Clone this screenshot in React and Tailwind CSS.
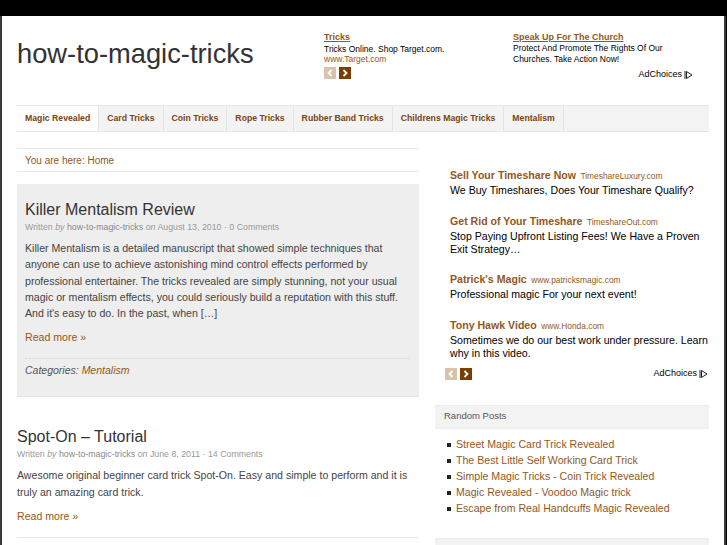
const brown = "text-[#94571a]";

const Arrows = () => (
  <div className="flex gap-[3px]">
    <span className="w-3 h-3 bg-[#d9c3ab] flex items-center justify-center">
      <svg width="8" height="8" viewBox="0 0 8 8"><path d="M5.5 1 L2.5 4 L5.5 7" fill="none" stroke="#fff" strokeWidth="1.8" /></svg>
    </span>
    <span className="w-3 h-3 bg-[#7a3e00] flex items-center justify-center">
      <svg width="8" height="8" viewBox="0 0 8 8"><path d="M2.5 1 L5.5 4 L2.5 7" fill="none" stroke="#fff" strokeWidth="1.8" /></svg>
    </span>
  </div>
);

const AdChoices = () => (
  <div className="flex items-center gap-[2px] text-[9px] text-black">
    <span>AdChoices</span>
    <svg width="9" height="10" viewBox="0 0 9 10">
      <path d="M1 1 V9" stroke="#222" strokeWidth="1" />
      <path d="M2.5 1.5 L8 5 L2.5 8.5 Z" fill="none" stroke="#222" strokeWidth="1" />
    </svg>
  </div>
);

const navItems = ["Magic Revealed", "Card Tricks", "Coin Tricks", "Rope Tricks", "Rubber Band Tricks", "Childrens Magic Tricks", "Mentalism"];

const sideAds = [
  { t: "Sell Your Timeshare Now", u: "TimeshareLuxury.com", d: "We Buy Timeshares, Does Your Timeshare Qualify?" },
  { t: "Get Rid of Your Timeshare", u: "TimeshareOut.com", d: "Stop Paying Upfront Listing Fees! We Have a Proven Exit Strategy…" },
  { t: "Patrick's Magic", u: "www.patricksmagic.com", d: "Professional magic For your next event!" },
  { t: "Tony Hawk Video", u: "www.Honda.com", d: "Sometimes we do our best work under pressure. Learn why in this video." },
];

const randomPosts = [
  "Street Magic Card Trick Revealed",
  "The Best Little Self Working Card Trick",
  "Simple Magic Tricks - Coin Trick Revealed",
  "Magic Revealed - Voodoo Magic trick",
  "Escape from Real Handcuffs Magic Revealed",
];

const Meta = ({ date, comments }) => (
  <p className="text-[8.8px] text-[#999] mt-[2px] leading-[11px]">
    Written <i>by</i> <span className="text-[#888]">how-to-magic-tricks</span> <i>on</i> {date} · {comments}
  </p>
);

export default function App() {
  return (
    <div className="h-[545px] bg-black pt-4 overflow-hidden font-['Liberation_Sans',Arial,sans-serif]">
      <div className="w-[726px] h-[529px] bg-white border-l-2 border-r-2 border-[#3a3a3a] pl-[15px]">
        {/* header */}
        <div className="flex h-[89px]">
          <h1 className="w-[307px] pt-[20px] text-[27.3px] leading-[36px] text-[#333]">how-to-magic-tricks</h1>
          <div className="w-[189px] pt-[15px]">
            <a className={`block text-[9px] font-bold underline leading-[12px] ${brown}`}>Tricks</a>
            <p className="text-[8.5px] leading-[10px] mt-[1px] text-black">Tricks Online. Shop Target.com.</p>
            <p className={`text-[8.5px] leading-[10px] ${brown}`}>www.Target.com</p>
            <div className="mt-[3px]"><Arrows /></div>
          </div>
          <div className="w-[180px] pt-[15px]">
            <a className={`block text-[9px] font-bold underline leading-[12px] ${brown}`}>Speak Up For The Church</a>
            <p className="w-[160px] text-[8.5px] leading-[11px] text-black">Protect And Promote The Rights Of Our Churches. Take Action Now!</p>
            <div className="flex justify-end mt-[3px]"><AdChoices /></div>
          </div>
        </div>

        {/* nav */}
        <div className="w-[692px] h-[27px] bg-[#f3f3f3] border-y border-[#e6e6e6] flex">
          {navItems.map((n, i) => (
            <div
              key={n}
              className={`h-full flex items-center px-[8px] text-[8.7px] font-bold text-[#7b4310] border-r border-[#e4e4e4] ${i === 0 ? "bg-white" : ""}`}
            >
              {n}
            </div>
          ))}
        </div>

        <div className="flex gap-4 mt-[16px]">
          {/* main column */}
          <div className="w-[402px]">
            <div className="border-y border-[#e8e8e8] h-[24px] flex items-center px-[8px]">
              <span className={`text-[10px] ${brown}`}>You are here: Home</span>
            </div>

            <div className="mt-[12px] bg-[#eeeeee] px-[8px] pt-[16px] pb-[18px] border-b border-dotted border-[#ddd]">
              <h2 className="text-[16px] leading-[20px] text-[#333]">Killer Mentalism Review</h2>
              <Meta date="August 13, 2010" comments="0 Comments" />
              <p className="mt-[7px] text-[10.6px] leading-[16.25px] text-[#444]">
                Killer Mentalism is a detailed manuscript that showed simple techniques that anyone can use to achieve astonishing mind control effects performed by professional entertainer. The tricks revealed are simply stunning, not your usual magic or mentalism effects, you could seriously build a reputation with this stuff. And it's easy to do. In the past, when […]
              </p>
              <a className={`block mt-[9px] text-[10.6px] leading-[14px] ${brown}`}>Read more »</a>
              <div className="mt-[14px] border-t border-dotted border-[#d8d8d8] pt-[3px] w-[384px]">
                <p className="text-[10.5px] italic text-[#555] leading-[16px]">
                  Categories: <span className={brown}>Mentalism</span>
                </p>
              </div>
            </div>

            <div className="mt-[30px]">
              <h2 className="text-[16px] leading-[20px] text-[#333]">Spot-On – Tutorial</h2>
              <Meta date="June 8, 2011" comments="14 Comments" />
              <p className="mt-[7px] text-[10.6px] leading-[16.25px] text-[#444]">
                Awesome original beginner card trick Spot-On. Easy and simple to perform and it is truly an amazing card trick.
              </p>
              <a className={`block mt-[9px] text-[10.6px] leading-[14px] ${brown}`}>Read more »</a>
              <div className="mt-[14px] border-t border-[#e8e8e8]" />
            </div>
          </div>

          {/* sidebar */}
          <div className="w-[274px]">
            <div className="pl-[10px] pr-[1px] pt-[19px]">
              {sideAds.map((a) => (
                <div key={a.t} className="pl-[5px] mb-[15.5px]">
                  <p className="leading-[14px]">
                    <span className={`text-[10.6px] font-bold ${brown}`}>{a.t}</span>{" "}
                    <span className={`text-[8.4px] ${brown}`}>{a.u}</span>
                  </p>
                  <p className="text-[10.6px] leading-[13px] text-black mt-[1px]">{a.d}</p>
                </div>
              ))}
              <div className="flex justify-between items-center -mt-[8px]">
                <Arrows />
                <AdChoices />
              </div>
            </div>

            <div className="mt-[24px] bg-[#f3f3f3] h-[24px] flex items-center px-[9px] border-y border-[#ededed]">
              <span className="text-[9.5px] text-[#555]">Random Posts</span>
            </div>
            <ul className="mt-[8px] pl-[12px]">
              {randomPosts.map((p) => (
                <li key={p} className="flex items-center h-[16px]">
                  <span className="w-[4px] h-[4px] bg-[#222] mr-[5px]" />
                  <span className={`text-[10.6px] ${brown}`}>{p}</span>
                </li>
              ))}
            </ul>
            <div className="mt-[21px] bg-[#f3f3f3] h-[25px] border-t border-[#ededed]" />
          </div>
        </div>
      </div>
    </div>
  );
}
